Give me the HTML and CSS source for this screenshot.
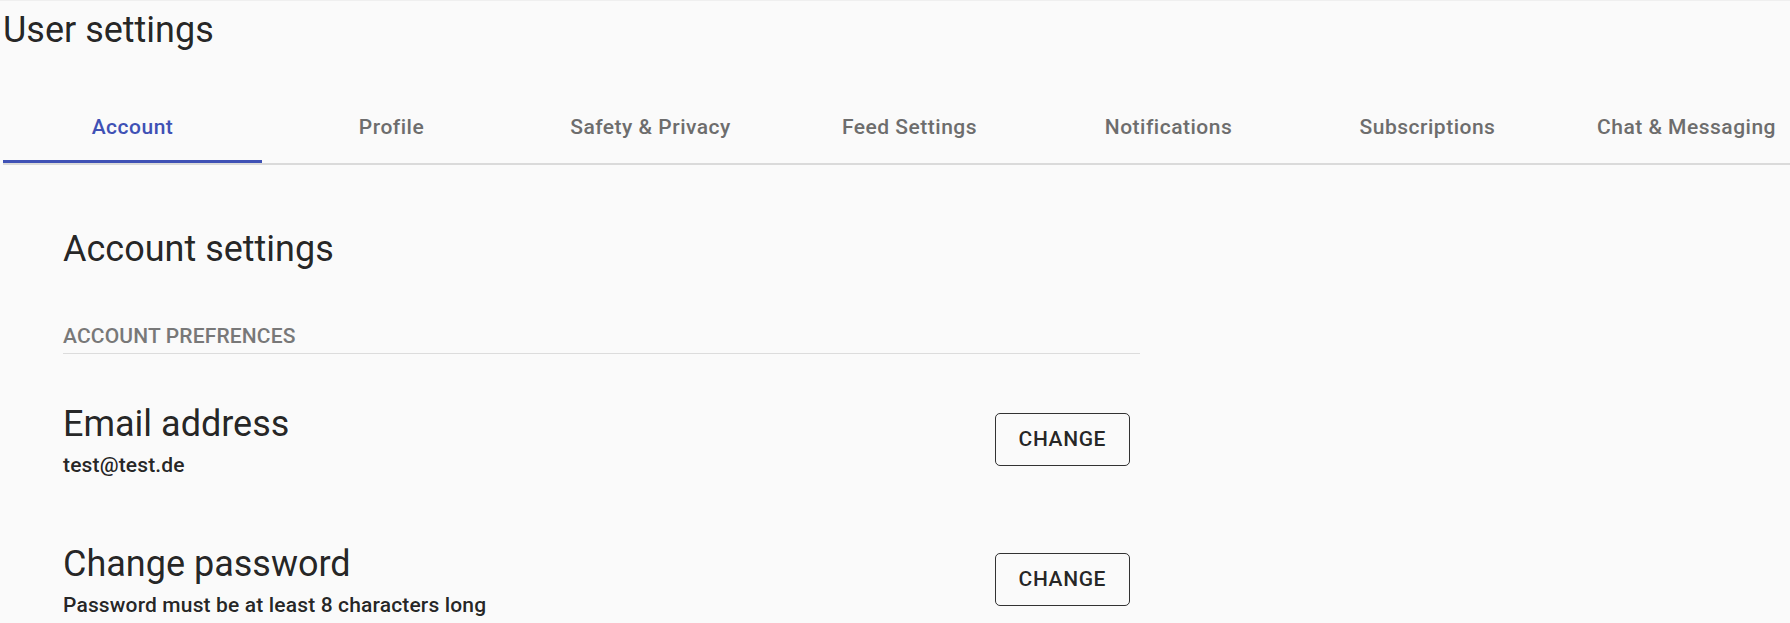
FILE: index.html
```html
<!DOCTYPE html>
<html lang="en">
<head>
<meta charset="utf-8">
<title>User settings</title>
<link rel="stylesheet" href="styles.css">
</head>
<body>
<div class="page">
  <h1 class="page-title">User settings</h1>
  <nav class="tabs">
    <div class="tab active">Account</div>
    <div class="tab">Profile</div>
    <div class="tab">Safety &amp; Privacy</div>
    <div class="tab">Feed Settings</div>
    <div class="tab">Notifications</div>
    <div class="tab">Subscriptions</div>
    <div class="tab">Chat &amp; Messaging</div>
  </nav>
  <section class="content">
    <h2 class="section-title">Account settings</h2>
    <div class="group-label">Account prefrences</div>
    <div class="setting-row">
      <div class="setting-text">
        <h3 class="setting-name">Email address</h3>
        <p class="setting-desc">test@test.de</p>
      </div>
      <button class="btn-outline">Change</button>
    </div>
    <div class="setting-row">
      <div class="setting-text">
        <h3 class="setting-name">Change password</h3>
        <p class="setting-desc">Password must be at least 8 characters long</p>
      </div>
      <button class="btn-outline">Change</button>
    </div>
  </section>
</div>
</body>
</html>
```
FILE: styles.css
```css
html, body {
  margin: 0;
  padding: 0;
  overflow: hidden;
  background: #fafafa;
}
body {
  font-family: Roboto, "Liberation Sans", Arial, sans-serif;
  color: rgba(0, 0, 0, 0.87);
  border-top: 1px solid #efefef;
}
.page {
  padding: 7.2px 0 0 3px;
}
.page-title {
  margin: 0;
  font-size: 36px;
  line-height: 44.46px;
  font-weight: 400;
}
.tabs {
  margin-top: 38.3px;
  display: flex;
  overflow: hidden;
  border-bottom: 2px solid #dadada;
}
.tab {
  flex: 0 0 259px;
  height: 72px;
  display: flex;
  align-items: center;
  justify-content: center;
  position: relative;
  font-size: 21px;
  line-height: 26.25px;
  font-weight: 500;
  letter-spacing: 0.5px;
  color: #6d6d6d;
  white-space: nowrap;
}
.tab.active {
  color: #3f51b5;
}
.tab.active::after {
  content: "";
  position: absolute;
  left: 0;
  right: 0;
  bottom: 0;
  height: 3px;
  background: #3f51b5;
}
.content {
  width: 1077px;
  padding-left: 60px;
  padding-top: 62.2px;
}
.section-title {
  margin: 0;
  font-size: 36px;
  line-height: 44.46px;
  font-weight: 400;
}
.group-label {
  margin-top: 48.1px;
  font-size: 21px;
  line-height: 33px;
  font-weight: 500;
  letter-spacing: 0.15px;
  text-transform: uppercase;
  color: #787878;
  border-bottom: 1px solid #dcdcdc;
}
.setting-row {
  display: flex;
  justify-content: space-between;
  align-items: flex-start;
  padding-right: 10px;
  margin-top: 48.8px;
}
.setting-row + .setting-row {
  margin-top: 58.8px;
}
.setting-name {
  margin: 0;
  font-size: 36px;
  line-height: 44.46px;
  font-weight: 400;
}
.setting-desc {
  margin: 0;
  font-size: 21px;
  line-height: 36.75px;
  font-weight: 500;
  letter-spacing: 0.15px;
}
.btn-outline {
  margin-top: 10.4px;
  box-sizing: border-box;
  height: 53px;
  padding: 0 23px;
  background: transparent;
  border: 1px solid rgba(0, 0, 0, 0.8);
  border-radius: 5px;
  font-family: Roboto, "Liberation Sans", Arial, sans-serif;
  font-size: 21px;
  line-height: 51px;
  font-weight: 500;
  letter-spacing: 0.6px;
  text-transform: uppercase;
  color: rgba(0, 0, 0, 0.87);
}
```
